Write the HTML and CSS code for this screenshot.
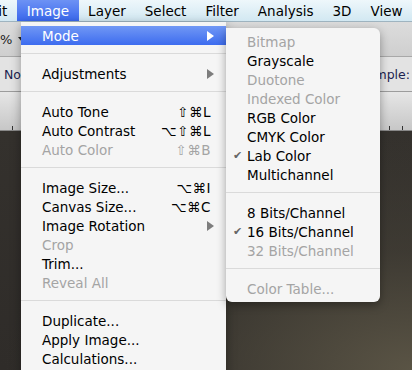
FILE: index.html
```html
<!DOCTYPE html>
<html lang="en">
<head>
    <meta charset="UTF-8">
    <title>Image menu</title>
    <link rel="stylesheet" href="styles.css">
</head>
<body>

    <!-- Mac menu bar -->
    <div class="menubar">
        <span class="bar-item cut">Edit</span>
        <span class="bar-item active">Image</span>
        <span class="bar-item">Layer</span>
        <span class="bar-item">Select</span>
        <span class="bar-item">Filter</span>
        <span class="bar-item">Analysis</span>
        <span class="bar-item">3D</span>
        <span class="bar-item">View</span>
    </div>

    <!-- Photoshop window behind the menus -->
    <div class="workspace">
        <div class="toolbar">
            <span class="zoom-pct">%</span>
            <span class="caret"></span>
        </div>
        <div class="options">
            <span class="blend-box">Nor</span>
            <span class="sample">ample:</span>
        </div>
        <div class="panelbar">
            <div class="ruler"></div>
        </div>
        <div class="canvas"></div>
    </div>

    <!-- Image menu -->
    <div class="menu main-menu">
        <div class="row highlight">Mode<span class="arrow"></span></div>
        <div class="sep"></div>
        <div class="row">Adjustments<span class="arrow"></span></div>
        <div class="sep"></div>
        <div class="row">Auto Tone<span class="key">⇧⌘L</span></div>
        <div class="row">Auto Contrast<span class="key">⌥⇧⌘L</span></div>
        <div class="row disabled">Auto Color<span class="key">⇧⌘B</span></div>
        <div class="sep"></div>
        <div class="row">Image Size...<span class="key">⌥⌘I</span></div>
        <div class="row">Canvas Size...<span class="key">⌥⌘C</span></div>
        <div class="row">Image Rotation<span class="arrow"></span></div>
        <div class="row disabled">Crop</div>
        <div class="row">Trim...</div>
        <div class="row disabled">Reveal All</div>
        <div class="sep"></div>
        <div class="row">Duplicate...</div>
        <div class="row">Apply Image...</div>
        <div class="row">Calculations...</div>

        <!-- Mode submenu -->
        <div class="menu submenu">
            <div class="row disabled"><span class="mark"></span>Bitmap</div>
            <div class="row"><span class="mark"></span>Grayscale</div>
            <div class="row disabled"><span class="mark"></span>Duotone</div>
            <div class="row disabled"><span class="mark"></span>Indexed Color</div>
            <div class="row"><span class="mark"></span>RGB Color</div>
            <div class="row"><span class="mark"></span>CMYK Color</div>
            <div class="row"><span class="mark">✔</span>Lab Color</div>
            <div class="row"><span class="mark"></span>Multichannel</div>
            <div class="sep"></div>
            <div class="row"><span class="mark"></span>8 Bits/Channel</div>
            <div class="row"><span class="mark">✔</span>16 Bits/Channel</div>
            <div class="row disabled"><span class="mark"></span>32 Bits/Channel</div>
            <div class="sep"></div>
            <div class="row disabled"><span class="mark"></span>Color Table...</div>
        </div>
    </div>

</body>
</html>
```

FILE: styles.css
```css
body {
    margin: 0;
    width: 412px;
    height: 370px;
    overflow: hidden;
    position: relative;
    font-family: "DejaVu Sans", "Liberation Sans", sans-serif;
    font-size: 13.5px;
    color: #000;
    background: #3a3632;
}

/* menu bar */

.menubar {
    display: flex;
    height: 22px;
    align-items: stretch;
    background: linear-gradient(to bottom, #eef7fb, #d2e8f2);
    border-bottom: 1px solid #9fb4c0;
    box-sizing: border-box;
}

.bar-item {
    display: flex;
    align-items: center;
    padding: 0 9.5px;
    white-space: nowrap;
}

.bar-item.cut {
    width: 21px;
    box-sizing: border-box;
    padding: 0 10px 0 0;
    justify-content: flex-end;
    overflow: hidden;
}

.bar-item.active {
    background: linear-gradient(to bottom, #6d92f4, #3a68ee);
    color: #fff;
}

/* photoshop window */

.workspace {
    display: flex;
    flex-direction: column;
    height: 348px;
}

.toolbar {
    height: 34px;
    background: linear-gradient(to bottom, #dcdcdc, #cfcfcf);
    display: flex;
    align-items: center;
    gap: 6px;
}

.zoom-pct {
    font-size: 13px;
    color: #222;
}

.caret {
    width: 0;
    height: 0;
    border-left: 4px solid transparent;
    border-right: 4px solid transparent;
    border-top: 5px solid #222;
}

.options {
    height: 34px;
    background: #e3e3e3;
    border-top: 1px solid #a8a8a8;
    border-bottom: 1px solid #9c9c9c;
    display: flex;
    align-items: center;
    justify-content: space-between;
    font-size: 12.5px;
}

.blend-box {
    margin-left: 4px;
    color: #1c2450;
}

.sample {
    margin-right: 2px;
    color: #1c2450;
}

.panelbar {
    height: 39px;
    background: linear-gradient(to bottom, #e6e6e6, #c6c6c6);
    display: flex;
    flex-direction: column;
    justify-content: flex-end;
}

.ruler {
    height: 4px;
    background: repeating-linear-gradient(to right, transparent 0 12px, #333 12px 13px);
    border-bottom: 1px solid #888;
}

.canvas {
    flex: 1;
    background:
        radial-gradient(ellipse at 100% 100%, #5a5445 0%, rgba(70, 66, 56, 0.6) 35%, transparent 70%),
        linear-gradient(to bottom, #34312d, #2f2c29);
}

/* menus */

.menu {
    position: absolute;
    background: #f5f5f5;
    box-shadow: 0 3px 10px rgba(0, 0, 0, 0.35);
}

.main-menu {
    left: 21px;
    top: 22px;
    width: 205px;
    height: 360px;
    padding-top: 4px;
    box-sizing: border-box;
}

.submenu {
    left: 205px;
    top: 6px;
    width: 154px;
    padding: 4px 0;
    border-radius: 0 6px 6px 6px;
}

.row {
    display: flex;
    align-items: center;
    height: 19px;
    padding: 0 15px 0 21px;
    white-space: nowrap;
}

.submenu .row {
    padding-left: 7px;
}

.row.highlight {
    background: linear-gradient(to bottom, #7198f5, #3d6cef);
    color: #fff;
}

.row.disabled {
    color: #a4a4a4;
}

.key {
    margin-left: auto;
    letter-spacing: 0.5px;
}

.arrow {
    margin-left: auto;
    margin-right: -3px;
    width: 0;
    height: 0;
    border-top: 5px solid transparent;
    border-bottom: 5px solid transparent;
    border-left: 7px solid #7d7d7d;
}

.highlight .arrow {
    border-left-color: #fff;
}

.mark {
    width: 14px;
    font-size: 11px;
    color: #666;
}

.sep {
    height: 1px;
    margin: 8px 0 10px;
    background: #dadada;
}
```
